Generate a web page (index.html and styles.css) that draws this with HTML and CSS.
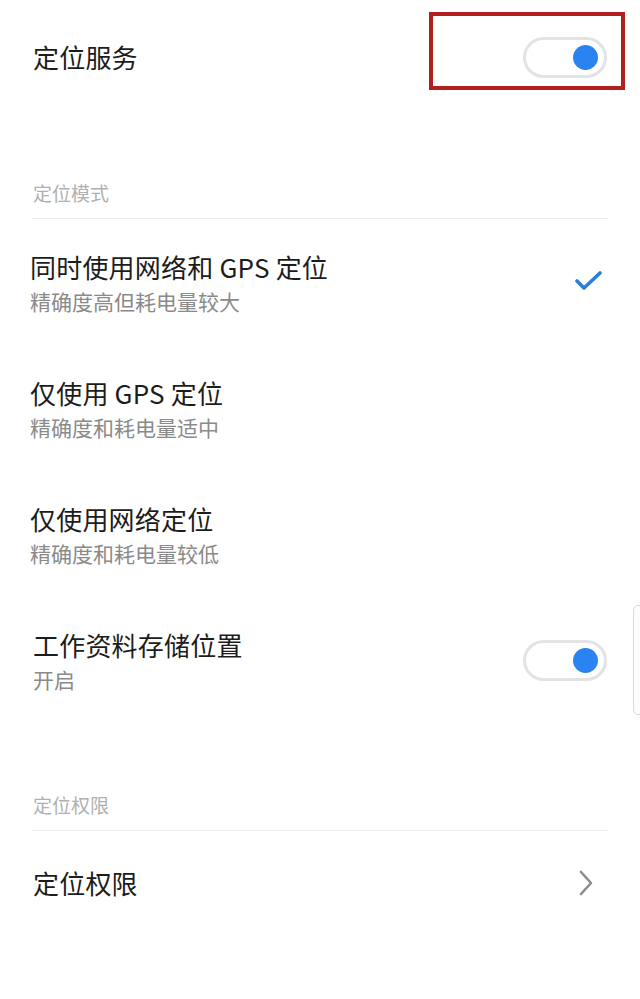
FILE: index.html
```html
<!DOCTYPE html>
<html lang="zh-CN">
<head>
    <meta charset="UTF-8">
    <meta name="viewport" content="width=device-width, initial-scale=1.0">
    <title>定位服务</title>
    <link rel="stylesheet" href="styles.css">
</head>
<body>
    <div class="page">
        <div class="row row-top">
            <div class="title">定位服务</div>
            <div class="switch on"><span class="knob"></span></div>
            <div class="mark-box"></div>
        </div>

        <div class="section-head">定位模式</div>

        <div class="row item">
            <div class="text">
                <div class="title">同时使用网络和 GPS 定位</div>
                <div class="sub">精确度高但耗电量较大</div>
            </div>
            <svg class="check" width="28" height="22" viewBox="0 0 28 22">
                <polyline points="2,10 9,17 25,2" fill="none" stroke="#2a80d6" stroke-width="3.6" stroke-linecap="round" stroke-linejoin="round"/>
            </svg>
        </div>

        <div class="row item">
            <div class="text">
                <div class="title">仅使用 GPS 定位</div>
                <div class="sub">精确度和耗电量适中</div>
            </div>
        </div>

        <div class="row item">
            <div class="text">
                <div class="title">仅使用网络定位</div>
                <div class="sub">精确度和耗电量较低</div>
            </div>
        </div>

        <div class="row item item-wide">
            <div class="text">
                <div class="title">工作资料存储位置</div>
                <div class="sub">开启</div>
            </div>
            <div class="switch on"><span class="knob"></span></div>
            <div class="scroll-thumb"></div>
        </div>

        <div class="section-head section-gap">定位权限</div>

        <div class="row row-link">
            <div class="title">定位权限</div>
            <svg class="chevron" width="16" height="26" viewBox="0 0 16 26">
                <polyline points="3,2 13,13 3,24" fill="none" stroke="#8c8c8c" stroke-width="2.6" stroke-linecap="round" stroke-linejoin="round"/>
            </svg>
        </div>
    </div>
</body>
</html>
```

FILE: styles.css
```css
body {
    margin: 0;
    background-color: #fff;
    font-family: "Noto Sans CJK SC", "Noto Sans", sans-serif;
    color: #1c1c1c;
}
.page {
    position: relative;
    width: 640px;
    overflow: hidden;
}
.row {
    position: relative;
    display: flex;
    align-items: center;
    justify-content: space-between;
    padding: 0 33px 0 33px;
}
.row-top {
    height: 114px;
}
.title {
    font-size: 26px;
    line-height: 32px;
    letter-spacing: 0.2px;
}
.sub {
    font-size: 21px;
    line-height: 26px;
    color: #8a8a8a;
    margin-top: 5px;
}
.section-head {
    margin: 0 32px;
    padding: 67px 0 13px 1px;
    font-size: 19px;
    line-height: 24px;
    color: #b0b0b0;
    border-bottom: 1px solid #ececec;
}
.section-gap {
    padding-top: 70px;
}
.item {
    height: 126px;
    padding-left: 30px;
}
.item-wide {
    padding-left: 33px;
}
.check {
    margin-right: 4px;
}
.switch {
    box-sizing: border-box;
    width: 84px;
    height: 41px;
    border: 3px solid #e3e3e3;
    border-radius: 21px;
    background-color: #fff;
    display: flex;
    align-items: center;
    justify-content: flex-end;
    padding-right: 6px;
}
.knob {
    width: 25px;
    height: 25px;
    border-radius: 50%;
    background-color: #2a83f0;
}
.mark-box {
    position: absolute;
    left: 429px;
    top: 12px;
    width: 188px;
    height: 70px;
    border: 4px solid #b1201e;
}
.scroll-thumb {
    position: absolute;
    right: -6px;
    top: 8px;
    width: 11px;
    height: 108px;
    border: 1px solid #dadada;
    border-radius: 5px;
    background-color: #fdfdfd;
}
.row-link {
    height: 104px;
}
.chevron {
    margin-right: 13px;
}
```
